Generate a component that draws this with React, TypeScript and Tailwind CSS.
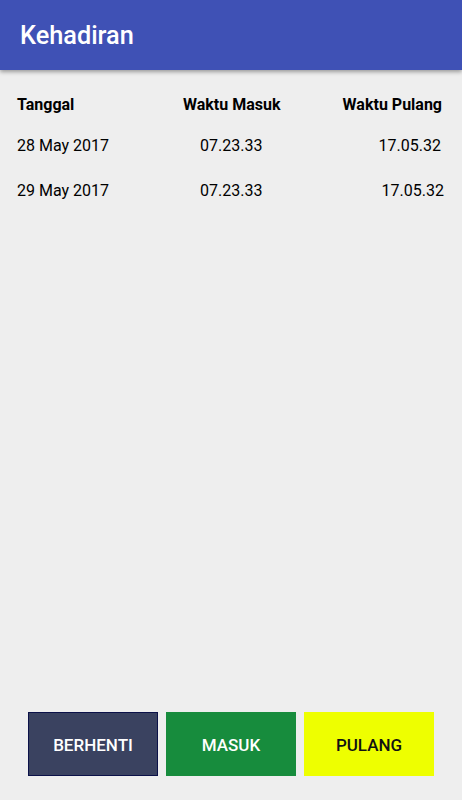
export default function App() {
  const rows = [
    { d: "28 May 2017", m: "07.23.33", p: "17.05.32", pr: "pr-[21px]" },
    { d: "29 May 2017", m: "07.23.33", p: "17.05.32", pr: "pr-[18px]" },
  ];
  return (
    <div className="w-[462px] h-[800px] bg-[#eeeeee] flex flex-col overflow-hidden" style={{ fontFamily: "Roboto, 'Liberation Sans', sans-serif" }}>
      <div className="h-[70px] shrink-0 bg-[#3f51b5] flex items-center pl-[20px] pt-[1px] shadow-[0_2px_4px_rgba(0,0,0,0.35)] relative z-10">
        <span className="text-white text-[25.3px] font-medium leading-none">Kehadiran</span>
      </div>
      <div className="flex flex-col pt-[23px] text-[16px] leading-[24px] text-black">
        <div className="flex items-center h-[24px] font-bold pl-[17px] pr-[20px]">
          <span className="w-[166px]">Tanggal</span>
          <span className="flex-1">Waktu Masuk</span>
          <span>Waktu Pulang</span>
        </div>
        {rows.map((r, i) => (
          <div key={i} className={`flex items-center h-[24px] pl-[17px] ${r.pr} ${i === 0 ? "mt-[17px]" : "mt-[21px]"}`}>
            <span className="w-[183px]">{r.d}</span>
            <span className="flex-1">{r.m}</span>
            <span>{r.p}</span>
          </div>
        ))}
      </div>
      <div className="flex-1" />
      <div className="flex gap-[8px] pl-[28px] pb-[24px]">
        <button className="w-[130px] h-[64px] pt-[3px] bg-[#3a4260] border border-[#0b1148] text-white text-[17px] font-medium">BERHENTI</button>
        <button className="w-[130px] h-[64px] pt-[3px] bg-[#178c3d] text-white text-[17px] font-medium">MASUK</button>
        <button className="w-[130px] h-[64px] pt-[3px] bg-[#eeff00] text-[#111] text-[17px] font-medium">PULANG</button>
      </div>
    </div>
  );
}
